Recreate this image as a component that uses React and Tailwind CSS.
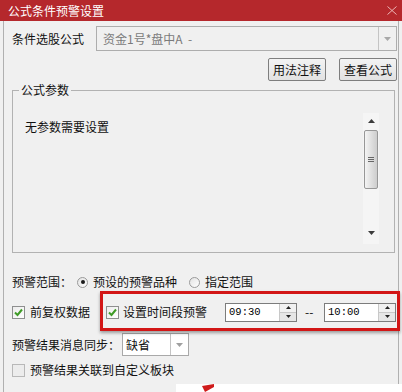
import React from 'react';

function CheckBox({ checked }) {
    return (
        <div className={`w-[13px] h-[13px] shrink-0 border flex items-center justify-center ${checked ? 'border-[#8e8f8f] bg-gradient-to-br from-[#ececec] to-white' : 'border-[#b8b8b8] bg-[#ececec]'}`}>
            {checked && (
                <svg width="11" height="11" viewBox="0 0 11 11">
                    <path d="M2 5.5 L4.5 8 L9 2.5" fill="none" stroke="#3f9b27" strokeWidth="2" />
                </svg>
            )}
        </div>
    )
}

function Radio({ checked }) {
    return (
        <div className="w-[11px] h-[11px] shrink-0 rounded-full border border-[#9a9a9a] bg-gradient-to-br from-[#e2e2e2] to-white flex items-center justify-center">
            {checked && <div className="w-[4px] h-[4px] rounded-full bg-[#1b1b1b]" />}
        </div>
    )
}

function TimeSpin({ value }) {
    return (
        <div className="w-[72px] h-[19px] border border-[#7c7c7c] bg-white flex">
            <div className="flex-1 pl-[3px] flex items-center font-['Liberation_Mono',monospace] text-[10.5px] text-black leading-none">
                {value}
            </div>
            <div className="w-[17px] flex flex-col border-l border-[#c8c8c8]">
                <div className="flex-1 bg-[#f1f1f1] border-b border-[#c8c8c8] flex items-center justify-center">
                    <svg width="5" height="3" viewBox="0 0 5 3"><path d="M0 3 L2.5 0 L5 3 Z" fill="#222" /></svg>
                </div>
                <div className="flex-1 bg-[#e6e6e6] flex items-center justify-center">
                    <svg width="5" height="3" viewBox="0 0 5 3"><path d="M0 0 L2.5 3 L5 0 Z" fill="#222" /></svg>
                </div>
            </div>
        </div>
    )
}

export default function App() {
    return (
        <div className="w-[402px] h-[392px] overflow-hidden bg-[#f0f0f0] relative font-['Noto_Sans_CJK_SC',sans-serif] text-[12px] leading-[14px] text-[#111]">
            {/* title bar */}
            <div className="h-[21px] bg-[#b5282c] flex items-center justify-between pl-[8px] pr-[5px]">
                <span className="text-white text-[12px]">公式条件预警设置</span>
                <svg width="10" height="9" viewBox="0 0 10 9">
                    <path d="M0.5 0.5 L9.5 8.5 M9.5 0.5 L0.5 8.5" stroke="#ecb4b4" strokeWidth="1" />
                </svg>
            </div>

            <div className="mx-[3px] h-[371px] border-x border-[#b0b0b0] flex flex-col">
                {/* formula select */}
                <div className="mt-[5px] h-[25px] flex items-center pl-[8px]">
                    <span className="w-[84px]">条件选股公式</span>
                    <div className="w-[301px] h-full border border-[#adadad] bg-[#f0f0f0] flex">
                        <div className="flex-1 pl-[6px] flex items-center text-[#7a7a7a] whitespace-pre">资金1号*盘中A  -</div>
                        <div className="w-[18px] border-l border-[#c4c4c4] flex items-center justify-center">
                            <svg width="7" height="4" viewBox="0 0 7 4"><path d="M0 0 L3.5 4 L7 0 Z" fill="#a8a8a8" /></svg>
                        </div>
                    </div>
                </div>

                {/* buttons */}
                <div className="mt-[7px] h-[23px] flex justify-end gap-[13px] pr-[1px]">
                    <button className="w-[58px] h-full border border-[#7e7e7e] rounded-[2px] bg-gradient-to-b from-[#f3f3f3] to-[#e2e2e2] text-[12px]">用法注释</button>
                    <button className="w-[58px] h-full border border-[#7e7e7e] rounded-[2px] bg-gradient-to-b from-[#f3f3f3] to-[#e2e2e2] text-[12px]">查看公式</button>
                </div>

                {/* group box */}
                <div className="relative ml-[8px] mt-[9px] w-[383px] h-[163px] border border-[#b2b2b2] pl-[7px] pr-[15px] pt-[22px]">
                    <span className="absolute -top-[8px] left-[6px] px-[2px] bg-[#f0f0f0]">公式参数</span>
                    <div className="h-[131px] flex">
                        <div className="flex-1 pl-[5px] pt-[7px]">无参数需要设置</div>
                        <div className="w-[16px] h-full bg-[#f5f5f5] flex flex-col">
                            <div className="h-[16px] flex items-center justify-center">
                                <svg width="7" height="4" viewBox="0 0 7 4"><path d="M0 4 L3.5 0 L7 4 Z" fill="#3c3c3c" /></svg>
                            </div>
                            <div className="mt-[1px] mx-[1px] h-[59px] rounded-[2px] border border-[#979797] bg-gradient-to-r from-[#f4f4f4] via-[#e0e0e0] to-[#cdcdcd] flex flex-col items-center justify-center gap-[1px]">
                                <div className="w-[6px] h-[1px] bg-[#666]" />
                                <div className="w-[6px] h-[1px] bg-[#666]" />
                                <div className="w-[6px] h-[1px] bg-[#666]" />
                            </div>
                            <div className="flex-1" />
                            <div className="h-[16px] mb-[3px] flex items-center justify-center">
                                <svg width="7" height="4" viewBox="0 0 7 4"><path d="M0 0 L3.5 4 L7 0 Z" fill="#3c3c3c" /></svg>
                            </div>
                        </div>
                    </div>
                </div>

                {/* range */}
                <div className="mt-[20px] h-[18px] flex items-center pl-[8px]">
                    <span>预警范围：</span>
                    <div className="ml-[5px]"><Radio checked /></div>
                    <span className="ml-[5px]">预设的预警品种</span>
                    <div className="ml-[12px]"><Radio /></div>
                    <span className="ml-[5px]">指定范围</span>
                </div>

                {/* checkboxes + time */}
                <div className="mt-[11px] h-[20px] flex items-center pl-[8px]">
                    <CheckBox checked />
                    <span className="ml-[5px]">前复权数据</span>
                    <div className="ml-[16px]"><CheckBox checked /></div>
                    <span className="ml-[4px]">设置时间段预警</span>
                    <div className="ml-[18px]"><TimeSpin value="09:30" /></div>
                    <span className="ml-[8px] w-[10px]">--</span>
                    <div className="ml-[9px]"><TimeSpin value="10:00" /></div>
                </div>

                {/* sync */}
                <div className="mt-[11px] h-[23px] flex items-center pl-[8px]">
                    <span>预警结果消息同步：</span>
                    <div className="ml-[2px] w-[67px] h-full border border-[#a9a9a9] bg-white flex">
                        <div className="flex-1 pl-[3px] flex items-center">缺省</div>
                        <div className="w-[18px] border-l border-[#c4c4c4] flex items-center justify-center">
                            <svg width="7" height="4" viewBox="0 0 7 4"><path d="M0 0 L3.5 4 L7 0 Z" fill="#a0a0a0" /></svg>
                        </div>
                    </div>
                </div>

                {/* link to block */}
                <div className="mt-[6px] h-[16px] flex items-center pl-[8px]">
                    <CheckBox />
                    <span className="ml-[5px]">预警结果关联到自定义板块</span>
                </div>
            </div>

            {/* annotation highlight */}
            <div className="absolute left-[100px] top-[291px] w-[300px] h-[40px] border-[3px] border-[#d21616] shadow-[0_2px_3px_rgba(0,0,0,0.35)]" />
            <div className="absolute left-[176px] top-[384px] w-[226px] h-[8px] bg-white">
                <svg className="absolute left-[26px] top-0" width="12" height="8" viewBox="0 0 12 8">
                    <path d="M0 2 L12 0 L12 3 L3 8 Z" fill="#cf1b1b" />
                </svg>
            </div>
        </div>
    )
}
